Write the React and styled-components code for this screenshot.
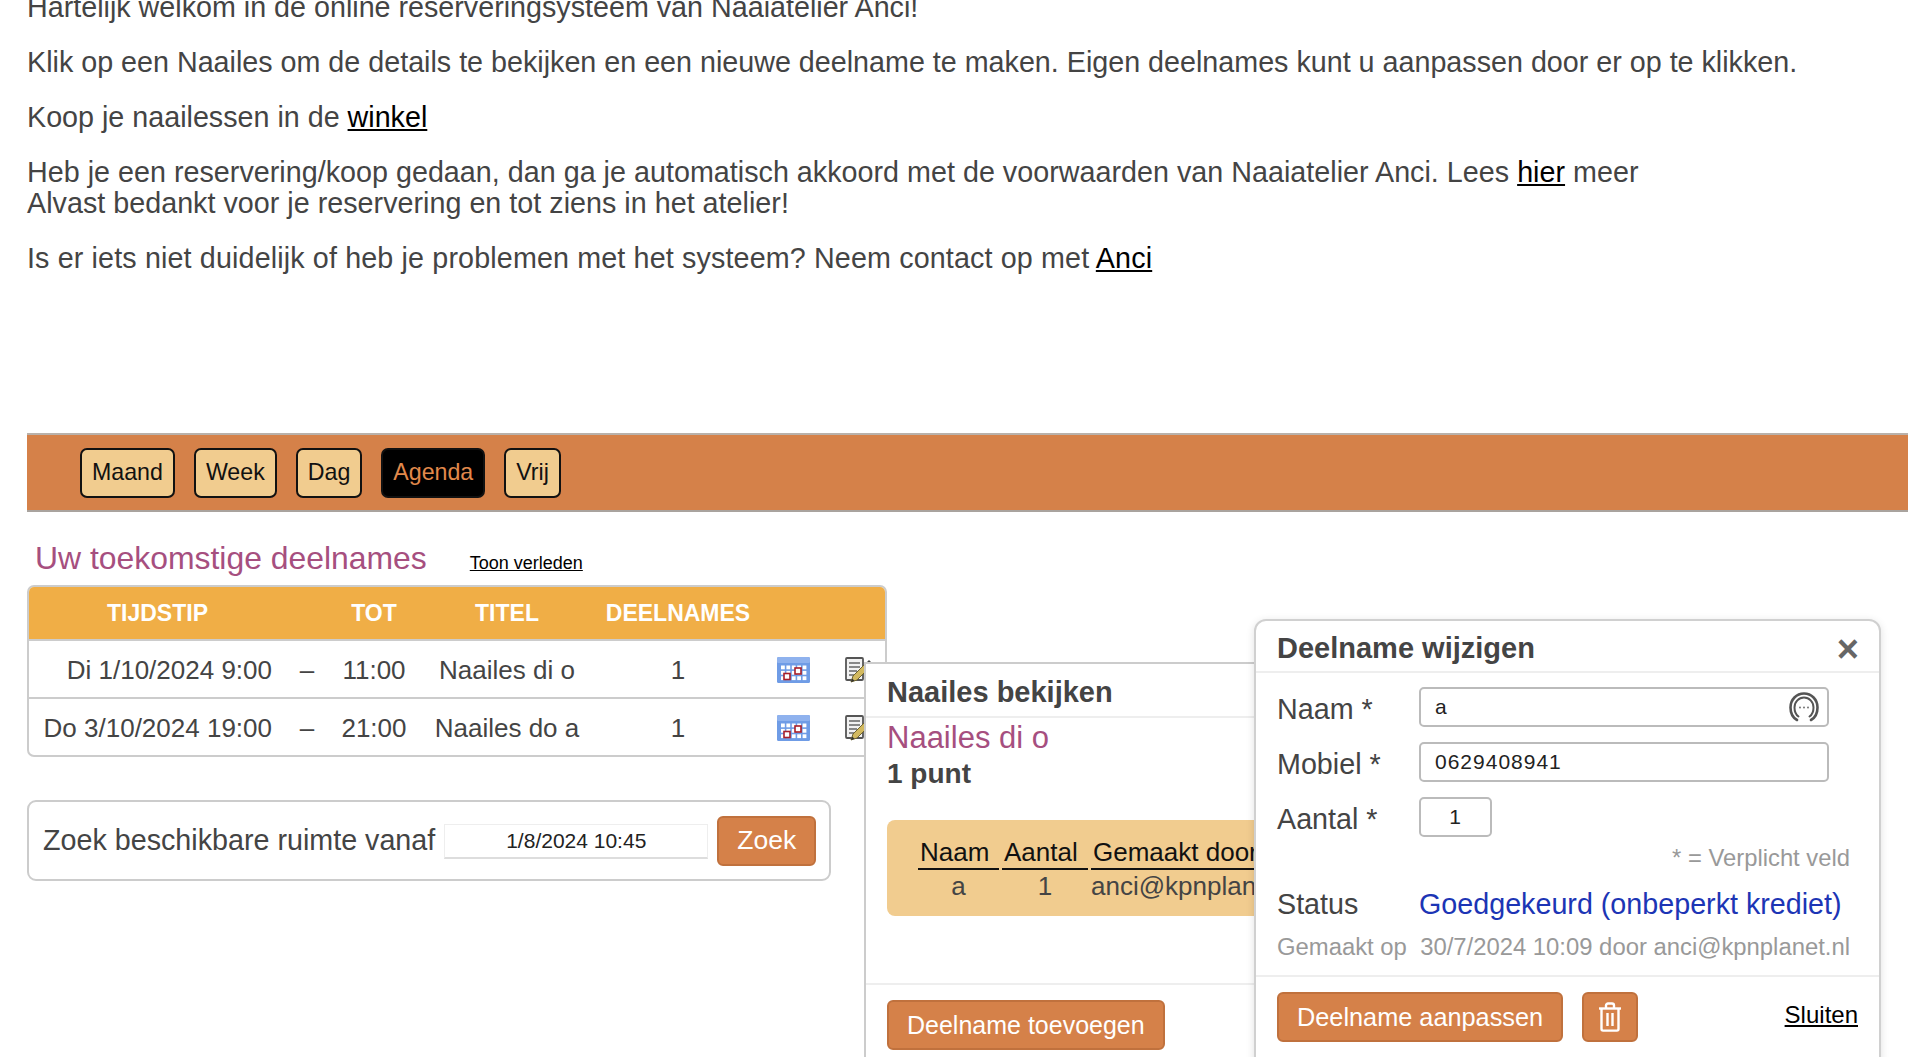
import React from "react";
import styled, { createGlobalStyle } from "styled-components";

const GlobalStyle = createGlobalStyle`
  html, body {
    margin: 0;
    padding: 0;
    height: 100%;
    overflow: hidden;
    background: #fff;
  }
  body {
    font-family: "Liberation Sans", Arial, sans-serif;
    color: #444;
  }
`;

const Page = styled.div`
  position: relative;
  width: 1919px;
  height: 1057px;
  overflow: hidden;
`;

const Content = styled.main`
  margin: -8px 11px 0 27px;
`;

const Intro = styled.div`
  height: 441px;
  font-size: 28.7px;
  line-height: 31px;
`;

const Para = styled.p`
  margin: 0 0 24px;
  white-space: nowrap;
  letter-spacing: ${(p) => p.$track || 0}px;
`;

const TextLink = styled.a`
  color: #000;
  text-decoration: underline;
`;

const Toolbar = styled.nav`
  display: flex;
  align-items: center;
  gap: 19px;
  height: 75px;
  padding-left: 53px;
  background: #d58149;
  border-top: 2px solid #b9b1aa;
  border-bottom: 2px solid #a9a39e;
`;

const TabButton = styled.button`
  height: 50px;
  padding: 0 10px;
  box-sizing: border-box;
  font: 23.2px "Liberation Sans", Arial, sans-serif;
  border: 2px solid #111;
  border-radius: 7px;
  background: ${(p) => (p.$active ? "#000" : "#f1cc8f")};
  color: ${(p) => (p.$active ? "#e2894b" : "#111")};
`;

const TitleRow = styled.div`
  display: flex;
  align-items: baseline;
  gap: 43px;
  padding: 26px 0 0 8px;
  height: 47px;
`;

const Title = styled.h2`
  margin: 0;
  font-size: 31.9px;
  line-height: 40px;
  font-weight: normal;
  color: #a64f7f;
`;

const SmallLink = styled(TextLink)`
  font-size: 18px;
`;

const ListCard = styled.div`
  width: 860px;
  border: 2px solid #ccc;
  border-radius: 7px;
  box-sizing: border-box;
  overflow: hidden;
`;

const ListTable = styled.table`
  width: 100%;
  border-collapse: collapse;
  table-layout: fixed;
`;

const HeadCell = styled.th`
  height: 52px;
  padding: 0;
  background: #f0ae46;
  color: #fff;
  font-size: 23px;
  font-weight: bold;
  text-align: center;
  border-bottom: 2px solid #ccc;
`;

const Row = styled.tr`
  & + & td {
    border-top: 2px solid #ccc;
  }
`;

const Cell = styled.td`
  height: 54px;
  padding: 2px ${(p) => (p.$right ? "14px" : "0")} 0 ${(p) => p.$left || 0}px;
  font-size: 26px;
  color: #444;
  white-space: nowrap;
  text-align: ${(p) => (p.$right ? "right" : "center")};
  vertical-align: middle;

  svg {
    display: block;
    margin: 0 auto;
  }
`;

const SearchBox = styled.form`
  display: flex;
  align-items: center;
  width: 804px;
  height: 81px;
  margin-top: 43px;
  padding: 0 14px;
  box-sizing: border-box;
  border: 2px solid #ccc;
  border-radius: 9px;
  font-size: 28.7px;
  white-space: nowrap;
`;

const DateInput = styled.input`
  width: 264px;
  height: 35px;
  margin: 2px 9px 0 9px;
  padding: 0;
  box-sizing: border-box;
  font: 21px "Liberation Sans", Arial, sans-serif;
  color: #222;
  text-align: center;
  border: 1px solid #eee;
  border-bottom: 2px solid #ddd;
`;

const OrangeButton = styled.button`
  height: 50px;
  padding: 0 ${(p) => p.$pad || 18}px;
  box-sizing: border-box;
  font: ${(p) => p.$size || 25}px "Liberation Sans", Arial, sans-serif;
  color: #fff;
  background: #d58149;
  border: 2px solid #c0713d;
  border-radius: 6px;
  display: inline-flex;
  align-items: center;
  justify-content: center;
  white-space: nowrap;
`;

const ViewPopup = styled.section`
  position: absolute;
  left: 864px;
  top: 662px;
  width: 480px;
  height: 420px;
  background: #fff;
  border: 2px solid #ccc;
  box-sizing: border-box;
  display: flex;
  flex-direction: column;
`;

const EditPopup = styled.section`
  position: absolute;
  left: 1254px;
  top: 619px;
  width: 627px;
  height: 470px;
  background: #fff;
  border: 2px solid #d0d0d0;
  border-radius: 12px;
  box-sizing: border-box;
  box-shadow: 0 2px 8px rgba(0, 0, 0, 0.12);
  display: flex;
  flex-direction: column;
`;

const PopupHead = styled.header`
  display: flex;
  align-items: center;
  justify-content: space-between;
  height: ${(p) => p.$h}px;
  flex: none;
  padding: ${(p) => p.$top}px 20px 0 ${(p) => p.$left}px;
  box-sizing: content-box;
  border-bottom: 2px solid #eee;
  font-size: 29px;
  font-weight: bold;
  color: #444;
`;

const CloseMark = styled.span`
  font-size: 38px;
  line-height: 36px;
  font-weight: bold;
  color: #666;
`;

const ViewBody = styled.div`
  height: 265px;
  padding: 0 20px 0 21px;
  flex: none;
  border-bottom: 2px solid #eee;
`;

const LessonName = styled.div`
  font-size: 31px;
  line-height: 40px;
  color: #a64f7f;
`;

const Points = styled.div`
  font-size: 28px;
  line-height: 32px;
  font-weight: bold;
`;

const YellowPanel = styled.div`
  height: 96px;
  margin-top: 30px;
  width: 500px;
  padding: 16px 0 0 31px;
  box-sizing: border-box;
  background: #f1cc8f;
  border-radius: 8px 0 0 8px;
`;

const PanelGrid = styled.div`
  display: grid;
  grid-template-columns: 81px 86px 240px;
  column-gap: 3px;
  font-size: 26px;
`;

const PanelHead = styled.div`
  padding-left: 2px;
  color: #111;
  border-bottom: 2px solid #111;
  line-height: 32px;
  text-align: left;
  white-space: nowrap;
  overflow: hidden;
`;

const PanelCell = styled.div`
  line-height: 33px;
  text-align: ${(p) => (p.$left ? "left" : "center")};
  white-space: nowrap;
  overflow: hidden;
`;

const ViewFoot = styled.div`
  padding: 15px 21px;
`;

const EditBody = styled.div`
  flex: none;
  height: 304px;
  padding: 14px 30px 0 21px;
  border-bottom: 2px solid #eee;
  box-sizing: border-box;
`;

const FormRow = styled.div`
  display: grid;
  grid-template-columns: 142px auto;
  align-items: center;
  height: 40px;
  margin-bottom: 15px;
  font-size: 28.7px;
`;

const FormLabel = styled.span`
  padding-top: 4px;
`;

const FieldWrap = styled.div`
  position: relative;
  width: ${(p) => p.$w}px;
`;

const Field = styled.input`
  width: 100%;
  height: 40px;
  padding: 0 14px;
  box-sizing: border-box;
  font: 21px "Liberation Sans", Arial, sans-serif;
  letter-spacing: 1px;
  color: #222;
  text-align: ${(p) => (p.$center ? "center" : "left")};
  border: 2px solid #bbb;
  border-radius: 5px;
  background: #fff;
`;

const FieldIcon = styled.svg`
  position: absolute;
  right: 10px;
  top: 5px;
`;

const Hint = styled.div`
  font-size: 23.8px;
  color: #999;
  text-align: right;
  line-height: 28px;
  margin: -8px -1px 0 0;
`;

const StatusRow = styled.div`
  display: grid;
  grid-template-columns: 142px auto;
  align-items: center;
  margin-top: 14px;
  font-size: 28.7px;
  line-height: 36px;
  white-space: nowrap;
`;

const StatusValue = styled.span`
  color: #1c35b5;
`;

const Created = styled.div`
  margin-top: 10px;
  font-size: 23.85px;
  line-height: 30px;
  color: #999;
  white-space: nowrap;
`;

const EditFoot = styled.div`
  display: flex;
  align-items: center;
  gap: 19px;
  padding: 15px 21px 0 21px;
`;

const CloseLink = styled(TextLink)`
  margin-left: auto;
  font-size: 24px;
  margin-top: -4px;
`;

const CalendarIcon = () => (
  <svg width="33" height="26" viewBox="0 0 33 26">
    <rect width="33" height="26" rx="1.5" fill="#6f9ce6" />
    <rect width="33" height="6" rx="1.5" fill="#8fb2ee" />
    {[0, 1, 2, 3, 4].map((c) =>
      [0, 1, 2].map((r) => (
        <rect key={`${c}-${r}`} x={4 + c * 5.4} y={8.5 + r * 5.4} width="3.8" height="3.8" fill="#fff" />
      ))
    )}
    <rect x="7" y="16.500" width="6" height="6" fill="#fff" stroke="#a81f2a" strokeWidth="1.600" />
    <rect x="18" y="11" width="6" height="6" fill="#fff" stroke="#a81f2a" strokeWidth="1.600" />
  </svg>
);

const NoteIcon = () => (
  <svg width="30" height="27" viewBox="0 0 30 27">
    <rect x="1" y="1" width="17" height="22" rx="1" fill="#f2f2f2" stroke="#555" strokeWidth="1.800" />
    <path d="M4 6h11M4 10h11M4 14h8M4 18h5" stroke="#666" strokeWidth="1.400" />
    <path d="M6 25l2-6L22 5l4 4L12 23z" fill="#d2b95f" stroke="#6d6330" strokeWidth="1" />
    <path d="M22 5l2-2 4 4-2 2z" fill="#444" />
    <path d="M6 25l1.200-3.500 2.300 2.300z" fill="#333" />
  </svg>
);

const TrashIcon = () => (
  <svg width="24" height="30" viewBox="0 0 24 30" fill="none" stroke="#fff" strokeWidth="2.400">
    <path d="M1 6.500h22" />
    <path d="M8 6V3.500C8 2.400 9 1.500 10 1.500h4c1 0 2 .9 2 2V6" />
    <path d="M3.500 7v20c0 .9.7 1.600 1.600 1.600h13.800c.9 0 1.600-.7 1.600-1.600V7" />
    <path d="M9.500 11v13M14.500 11v13" />
  </svg>
);

const KeyIcon = () => (
  <FieldIcon width="30" height="30" viewBox="0 0 30 30" fill="none" stroke="#555" strokeLinecap="round">
    <path d="M8 28C3.500 25.500 1.500 20.500 1.500 15.500 1.500 7.500 7.500 1.500 15 1.500s13.500 6 13.500 14c0 5-2 10-6.500 12.500" strokeWidth="2.600" />
    <path d="M9.500 24.500C6.500 22.500 5.500 19.500 5.500 15.500 5.500 9.800 9.800 5.500 15 5.500s9.500 4.300 9.500 10c0 4-1 7-4 9" strokeWidth="2" />
    <circle cx="11" cy="15.500" r="0.900" fill="#666" stroke="none" />
    <circle cx="15" cy="15.500" r="0.900" fill="#666" stroke="none" />
    <circle cx="19" cy="15.500" r="0.900" fill="#666" stroke="none" />
  </FieldIcon>
);

const tabs = ["Maand", "Week", "Dag", "Agenda", "Vrij"];

const bookings = [
  { start: "Di 1/10/2024 9:00", end: "11:00", title: "Naailes di o" },
  { start: "Do 3/10/2024 19:00", end: "21:00", title: "Naailes do a" },
];

export default function App() {
  return (
    <Page>
      <GlobalStyle />
      <Content>
        <Intro>
          <Para>Hartelijk welkom in de online reserveringsysteem van Naaiatelier Anci!</Para>
          <Para>
            Klik op een Naailes om de details te bekijken en een nieuwe deelname te maken. Eigen deelnames kunt u
            aanpassen door er op te klikken.
          </Para>
          <Para>
            Koop je naailessen in de <TextLink href="#">winkel</TextLink>
          </Para>
          <Para $track={0.02}>
            Heb je een reservering/koop gedaan, dan ga je automatisch akkoord met de voorwaarden van Naaiatelier Anci.
            Lees <TextLink href="#">hier</TextLink> meer
            <br />
            Alvast bedankt voor je reservering en tot ziens in het atelier!
          </Para>
          <Para $track={0.14}>
            Is er iets niet duidelijk of heb je problemen met het systeem? Neem contact op met{" "}
            <TextLink href="#">Anci</TextLink>
          </Para>
        </Intro>
        <Toolbar>
          {tabs.map((t) => (
            <TabButton key={t} $active={t === "Agenda"}>
              {t}
            </TabButton>
          ))}
        </Toolbar>
        <TitleRow>
          <Title>Uw toekomstige deelnames</Title>
          <SmallLink href="#">Toon verleden</SmallLink>
        </TitleRow>
        <ListCard>
          <ListTable>
            <colgroup>
              <col width="257" />
              <col width="42" />
              <col width="92" />
              <col width="174" />
              <col width="168" />
              <col width="62" />
              <col width="61" />
            </colgroup>
            <thead>
              <tr>
                <HeadCell>TIJDSTIP</HeadCell>
                <HeadCell />
                <HeadCell>TOT</HeadCell>
                <HeadCell>TITEL</HeadCell>
                <HeadCell>DEELNAMES</HeadCell>
                <HeadCell />
                <HeadCell />
              </tr>
            </thead>
            <tbody>
              {bookings.map((b) => (
                <Row key={b.start}>
                  <Cell $right>{b.start}</Cell>
                  <Cell>–</Cell>
                  <Cell>{b.end}</Cell>
                  <Cell>{b.title}</Cell>
                  <Cell>1</Cell>
                  <Cell>
                    <CalendarIcon />
                  </Cell>
                  <Cell $left={10}>
                    <NoteIcon />
                  </Cell>
                </Row>
              ))}
            </tbody>
          </ListTable>
        </ListCard>
        <SearchBox>
          Zoek beschikbare ruimte vanaf
          <DateInput defaultValue="1/8/2024 10:45" />
          <OrangeButton type="button" $size={26.5}>
            Zoek
          </OrangeButton>
        </SearchBox>
      </Content>

      <ViewPopup>
        <PopupHead $h={48} $top={4} $left={21}>
          Naailes bekijken
        </PopupHead>
        <ViewBody>
          <LessonName>Naailes di o</LessonName>
          <Points>1 punt</Points>
          <YellowPanel>
            <PanelGrid>
              <PanelHead>Naam</PanelHead>
              <PanelHead>Aantal</PanelHead>
              <PanelHead>Gemaakt door</PanelHead>
              <PanelCell>a</PanelCell>
              <PanelCell>1</PanelCell>
              <PanelCell $left>anci@kpnplanet.nl</PanelCell>
            </PanelGrid>
          </YellowPanel>
        </ViewBody>
        <ViewFoot>
          <OrangeButton type="button">Deelname toevoegen</OrangeButton>
        </ViewFoot>
      </ViewPopup>

      <EditPopup>
        <PopupHead $h={45} $top={5} $left={21}>
          Deelname wijzigen
          <CloseMark>×</CloseMark>
        </PopupHead>
        <EditBody>
          <FormRow>
            <FormLabel>Naam *</FormLabel>
            <FieldWrap $w={410}>
              <Field defaultValue="a" />
              <KeyIcon />
            </FieldWrap>
          </FormRow>
          <FormRow>
            <FormLabel>Mobiel *</FormLabel>
            <FieldWrap $w={410}>
              <Field defaultValue="0629408941" />
            </FieldWrap>
          </FormRow>
          <FormRow>
            <FormLabel>Aantal *</FormLabel>
            <FieldWrap $w={73}>
              <Field defaultValue="1" $center />
            </FieldWrap>
          </FormRow>
          <Hint>* = Verplicht veld</Hint>
          <StatusRow>
            Status
            <StatusValue>Goedgekeurd (onbeperkt krediet)</StatusValue>
          </StatusRow>
          <Created>Gemaakt op&nbsp; 30/7/2024 10:09 door anci@kpnplanet.nl</Created>
        </EditBody>
        <EditFoot>
          <OrangeButton type="button" $size={25.3}>
            Deelname aanpassen
          </OrangeButton>
          <OrangeButton type="button" $pad={14}>
            <TrashIcon />
          </OrangeButton>
          <CloseLink href="#">Sluiten</CloseLink>
        </EditFoot>
      </EditPopup>
    </Page>
  );
}
